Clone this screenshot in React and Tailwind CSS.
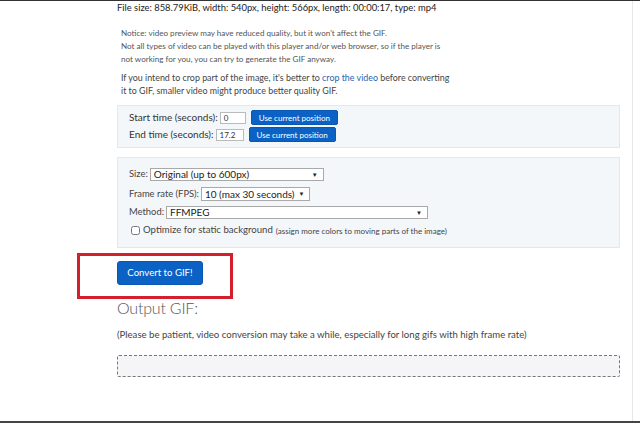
import { useState } from 'react';

function Select({ value, className }) {
  return (
    <div className={`flex items-center justify-between bg-white border border-[#a9a9a9] pl-[3px] pr-[5px] text-[10px] text-[#222] whitespace-nowrap ${className}`}>
      <span>{value}</span>
      <span className="ml-[4px] text-[6px] leading-none">▼</span>
    </div>
  );
}

function SmallButton({ children }) {
  return (
    <button className="h-[15px] px-[7px] bg-[#0b62c4] border border-[#0957b0] rounded-[2px] text-white text-[8px] leading-none whitespace-nowrap">
      {children}
    </button>
  );
}

export default function App() {
  const [optimize, setOptimize] = useState(false);

  return (
    <div
      className="w-[640px] h-[423px] bg-white border-t border-[#333] border-b-2 border-b-[#444] overflow-hidden relative"
      style={{ fontFamily: 'Lato, "Open Sans", sans-serif' }}
    >
      <div className="w-[633px] h-full border-r border-[#e8e8e8]">
        <div className="ml-[117px] w-[503px]">
          <p className="text-[9.4px] leading-[13px] text-[#222]">
            File size: 858.79KiB, width: 540px, height: 566px, length: 00:00:17, type: mp4
          </p>

          {/* Notice */}
          <div className="mt-[13px] pl-[4px] text-[8.1px] leading-[13px] text-[#555]">
            <p>Notice: video preview may have reduced quality, but it won't affect the GIF.</p>
            <p>Not all types of video can be played with this player and/or web browser, so if the player is</p>
            <p>not working for you, you can try to generate the GIF anyway.</p>
          </div>
          <div className="mt-[5px] pl-[4px] text-[8.9px] leading-[13px] text-[#444]">
            <p>
              If you intend to crop part of the image, it's better to{' '}
              <span className="text-[#2a62b0]">crop the video</span> before converting
            </p>
            <p>it to GIF, smaller video might produce better quality GIF.</p>
          </div>

          {/* Cut panel */}
          <div className="mt-[8px] h-[43px] bg-[#f4f7fa] border border-[#e4e8ec] pl-[11px] pt-[4px] text-[10px] text-[#333]">
            <div className="flex items-center h-[15px]">
              <span>Start time (seconds):</span>
              <div className="ml-[2px] w-[26px] h-[12px] bg-white border border-[#bbb] text-[8px] leading-[10px] pl-[3px]">0</div>
              <div className="ml-[5px]">
                <SmallButton>Use current position</SmallButton>
              </div>
            </div>
            <div className="flex items-center h-[15px] mt-[2px]">
              <span>End time (seconds):</span>
              <div className="ml-[2px] w-[28px] h-[12px] bg-white border border-[#bbb] text-[8px] leading-[10px] pl-[3px]">17.2</div>
              <div className="ml-[5px]">
                <SmallButton>Use current position</SmallButton>
              </div>
            </div>
          </div>

          {/* Options panel */}
          <div className="mt-[9px] h-[91px] bg-[#f4f7fa] border border-[#e4e8ec] pl-[11px] pt-[10px] text-[9.4px] text-[#444]">
            <div className="flex items-center h-[13px]">
              <span className="mr-[2px]">Size:</span>
              <Select value="Original (up to 600px)" className="w-[174px] h-[13px]" />
            </div>
            <div className="flex items-center h-[14px] mt-[6px]">
              <span className="mr-[2px]">Frame rate (FPS):</span>
              <Select value="10 (max 30 seconds)" className="h-[14px]" />
            </div>
            <div className="flex items-center h-[13px] mt-[5px]">
              <span className="mr-[2px]">Method:</span>
              <Select value="FFMPEG" className="w-[262px] h-[13px]" />
            </div>
            <label className="flex items-center h-[13px] mt-[5px] ml-[2px]">
              <input
                type="checkbox"
                checked={optimize}
                onChange={() => setOptimize(!optimize)}
                className="w-[9px] h-[9px] mr-[3px] accent-[#888]"
              />
              <span className="text-[9.6px] text-[#444]">Optimize for static background</span>
              <span className="ml-[3px] text-[8px] text-[#444]">(assign more colors to moving parts of the image)</span>
            </label>
          </div>

          <button className="mt-[13px] w-[86px] h-[24px] bg-[#0b62c4] border border-[#0957b0] rounded-[3px] text-white text-[9.6px]">
            Convert to GIF!
          </button>

          <h2 className="mt-[13px] text-[16px] leading-[20px] text-[#555] font-light tracking-[-0.2px]">Output GIF:</h2>
          <p className="mt-[11px] text-[9.6px] leading-[12px] text-[#444]">
            (Please be patient, video conversion may take a while, especially for long gifs with high frame rate)
          </p>
          <div className="mt-[14px] h-[22px] bg-[#f5f5f7] border border-dashed border-[#777] rounded-[2px]" />
        </div>
      </div>

      {/* annotation */}
      <div className="absolute left-[77px] top-[252px] w-[156px] h-[46px] border-[3px] border-[#d4202c]" />
    </div>
  );
}
